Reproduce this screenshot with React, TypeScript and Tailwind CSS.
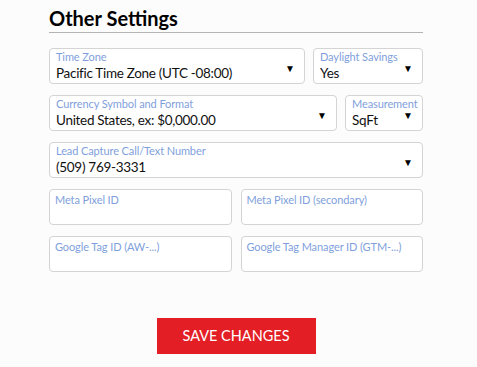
import React from "react";

function Arrow({ className = "" }: { className?: string }) {
  return <span className={`text-[10px] leading-none text-black ${className}`}>▼</span>;
}

function SelectField({
  label,
  value,
  className = "",
}: {
  label: string;
  value: string;
  className?: string;
}) {
  return (
    <div
      className={`relative h-[36px] rounded-[4px] border border-[#d4d4d4] bg-white pl-[6px] pr-[6px] ${className}`}
    >
      <div className="pt-[2px] text-[11px] leading-[12px] tracking-[-0.1px] text-[#7f9fdc]">
        {label}
      </div>
      <div className="mt-[1px] text-[13.5px] leading-[18px] tracking-[-0.3px] text-[#111]">
        {value}
      </div>
      <Arrow className="absolute right-[9px] top-[14px]" />
    </div>
  );
}

function InputField({ label }: { label: string }) {
  return (
    <div className="h-[36px] flex-1 rounded-[4px] border border-[#d4d4d4] bg-white px-[5px] pt-[3px]">
      <div className="text-[11px] leading-[13px] tracking-[-0.1px] text-[#7f9fdc]">{label}</div>
    </div>
  );
}

export default function App() {
  return (
    <div
      className="min-h-screen w-full bg-[#fcfcfc]"
      style={{ fontFamily: "Lato, 'Open Sans', sans-serif" }}
    >
      <div className="ml-[49px] w-[374px] pt-[6px]">
        <h2 className="text-[20px] font-bold leading-[24px] text-black">Other Settings</h2>
        <div className="mt-[2px] h-px w-full bg-[#b4b4b4]" />

        <div className="mt-[15px] flex flex-col gap-[11px]">
          <div className="flex gap-[8px]">
            <SelectField
              className="flex-1"
              label="Time Zone"
              value="Pacific Time Zone (UTC -08:00)"
            />
            <SelectField className="w-[110px]" label="Daylight Savings" value="Yes" />
          </div>

          <div className="flex gap-[8px]">
            <SelectField
              className="flex-1"
              label="Currency Symbol and Format"
              value="United States, ex: $0,000.00"
            />
            <SelectField className="w-[78px] pl-[5px]" label="Measurement" value="SqFt" />
          </div>

          <SelectField
            className="w-full"
            label="Lead Capture Call/Text Number"
            value="(509) 769-3331"
          />

          <div className="flex gap-[9px]">
            <InputField label="Meta Pixel ID" />
            <InputField label="Meta Pixel ID (secondary)" />
          </div>

          <div className="flex gap-[9px]">
            <InputField label="Google Tag ID (AW-...)" />
            <InputField label="Google Tag Manager ID (GTM-...)" />
          </div>
        </div>

        <div className="mt-[46px] flex justify-center">
          <button className="h-[36px] w-[159px] bg-[#e31e24] text-[14.5px] uppercase text-white">
            Save Changes
          </button>
        </div>
      </div>
    </div>
  );
}
